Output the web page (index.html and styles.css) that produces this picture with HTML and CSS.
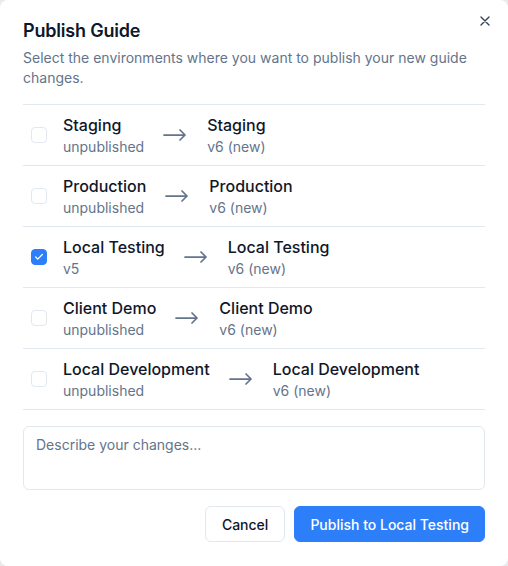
FILE: index.html
```html
<!DOCTYPE html>
<html lang="en">
<head>
<meta charset="utf-8">
<title>Publish Guide</title>
<link rel="stylesheet" href="styles.css">
</head>
<body>
<div class="dialog">
  <button class="close" aria-label="Close">
    <svg width="16" height="16" viewBox="0 0 24 24" fill="none" stroke="currentColor" stroke-width="2" stroke-linecap="round"><path d="M18 6 6 18M6 6l12 12"/></svg>
  </button>
  <h2 class="title">Publish Guide</h2>
  <p class="desc">Select the environments where you want to publish your new guide changes.</p>

  <ul class="envs">
    <li class="env">
      <span class="check"></span>
      <div class="side"><div class="name">Staging</div><div class="sub">unpublished</div></div>
      <svg class="arrow" width="24" height="14" viewBox="0 0 24 14" fill="none" stroke="currentColor" stroke-width="1.75" stroke-linecap="round" stroke-linejoin="round"><path d="M1 7h21M17 2l5 5-5 5"/></svg>
      <div class="side"><div class="name">Staging</div><div class="sub">v6 (new)</div></div>
    </li>
    <li class="env">
      <span class="check"></span>
      <div class="side"><div class="name">Production</div><div class="sub">unpublished</div></div>
      <svg class="arrow" width="24" height="14" viewBox="0 0 24 14" fill="none" stroke="currentColor" stroke-width="1.75" stroke-linecap="round" stroke-linejoin="round"><path d="M1 7h21M17 2l5 5-5 5"/></svg>
      <div class="side"><div class="name">Production</div><div class="sub">v6 (new)</div></div>
    </li>
    <li class="env">
      <span class="check checked">
        <svg width="10" height="10" viewBox="0 0 24 24" fill="none" stroke="#fff" stroke-width="3" stroke-linecap="round" stroke-linejoin="round"><path d="M20 6 9 17l-5-5"/></svg>
      </span>
      <div class="side"><div class="name">Local Testing</div><div class="sub">v5</div></div>
      <svg class="arrow" width="24" height="14" viewBox="0 0 24 14" fill="none" stroke="currentColor" stroke-width="1.75" stroke-linecap="round" stroke-linejoin="round"><path d="M1 7h21M17 2l5 5-5 5"/></svg>
      <div class="side"><div class="name">Local Testing</div><div class="sub">v6 (new)</div></div>
    </li>
    <li class="env">
      <span class="check"></span>
      <div class="side"><div class="name">Client Demo</div><div class="sub">unpublished</div></div>
      <svg class="arrow" width="24" height="14" viewBox="0 0 24 14" fill="none" stroke="currentColor" stroke-width="1.75" stroke-linecap="round" stroke-linejoin="round"><path d="M1 7h21M17 2l5 5-5 5"/></svg>
      <div class="side"><div class="name">Client Demo</div><div class="sub">v6 (new)</div></div>
    </li>
    <li class="env">
      <span class="check"></span>
      <div class="side"><div class="name">Local Development</div><div class="sub">unpublished</div></div>
      <svg class="arrow" width="24" height="14" viewBox="0 0 24 14" fill="none" stroke="currentColor" stroke-width="1.75" stroke-linecap="round" stroke-linejoin="round"><path d="M1 7h21M17 2l5 5-5 5"/></svg>
      <div class="side"><div class="name">Local Development</div><div class="sub">v6 (new)</div></div>
    </li>
  </ul>

  <textarea class="notes" placeholder="Describe your changes..."></textarea>

  <div class="actions">
    <button class="btn btn-outline">Cancel</button>
    <button class="btn btn-primary">Publish to Local Testing</button>
  </div>
</div>
</body>
</html>
```

FILE: styles.css
```css
html {
  background: #e9eaec;
}
body {
  margin: 0;
  font-family: Inter, "Noto Sans", "Liberation Sans", sans-serif;
  color: #0f172a;
}
.dialog {
  position: relative;
  box-sizing: border-box;
  width: 508px;
  height: 566px;
  background: #fff;
  border-radius: 8px;
  padding: 18px 23px 24px;
  display: flex;
  flex-direction: column;
}
.close {
  position: absolute;
  top: 13px;
  right: 15px;
  border: 0;
  background: none;
  padding: 0;
  width: 16px;
  height: 16px;
  color: #334155;
}
.close svg { display: block; }
.title {
  margin: 0;
  font-size: 18px;
  line-height: 26px;
  font-weight: 600;
  letter-spacing: -0.2px;
  color: #0f172a;
}
.desc {
  margin: 4px 0 0;
  font-size: 14px;
  line-height: 20px;
  color: #64748b;
}
.envs {
  list-style: none;
  margin: 16px 0 0;
  padding: 0;
  border-top: 1px solid #e2e8f0;
}
.env {
  display: flex;
  align-items: center;
  gap: 16px;
  padding: 8px 8px;
  border-bottom: 1px solid #e2e8f0;
}
.check {
  box-sizing: border-box;
  width: 16px;
  height: 16px;
  border: 1px solid #e2e8f0;
  border-radius: 4px;
  flex: none;
  display: flex;
  align-items: center;
  justify-content: center;
}
.check.checked {
  background: #2d7ff9;
  border-color: #2d7ff9;
}
.side {
  display: flex;
  flex-direction: column;
}
.name {
  font-size: 16px;
  line-height: 24px;
  font-weight: 500;
  color: #0f172a;
}
.sub {
  font-size: 14px;
  line-height: 20px;
  color: #64748b;
}
.arrow {
  flex: none;
  color: #64748b;
  margin: 0 4px 0 3px;
}
.notes {
  margin-top: 16px;
  box-sizing: border-box;
  width: 100%;
  height: 64px;
  resize: none;
  border: 1px solid #e2e8f0;
  border-radius: 6px;
  padding: 8px 12px;
  font-family: inherit;
  font-size: 14px;
  line-height: 20px;
  color: #0f172a;
  outline: none;
}
.notes::placeholder {
  color: #64748b;
}
.actions {
  margin-top: 16px;
  display: flex;
  justify-content: flex-end;
  gap: 9px;
}
.btn {
  height: 36px;
  padding: 0 16px;
  border-radius: 6px;
  font-family: inherit;
  font-size: 14px;
  font-weight: 500;
  cursor: pointer;
}
.btn-outline {
  background: #fff;
  border: 1px solid #e2e8f0;
  color: #0f172a;
}
.btn-primary {
  background: #2d7ff9;
  border: 1px solid #2d7ff9;
  color: #fff;
  padding: 0 15px;
}
```
